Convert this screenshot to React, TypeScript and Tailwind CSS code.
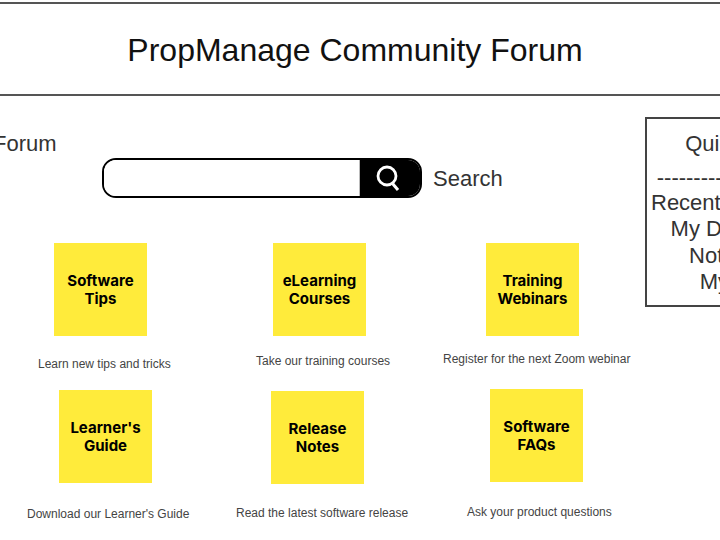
import React from "react";

const sans = "font-['Liberation_Sans',Arial,sans-serif]";

interface TileProps {
  lines: string[];
  caption: string;
  boxClass: string;
  captionClass: string;
}

function Tile({ lines, caption, boxClass, captionClass }: TileProps) {
  return (
    <div className="flex flex-col items-start">
      <div className={`w-[93px] h-[93px] bg-[#ffeb3b] flex flex-col items-center justify-center text-[15px] leading-[17.5px] font-bold text-black font-['Inter',sans-serif] ${boxClass}`}>
        {lines.map((l) => (
          <span key={l}>{l}</span>
        ))}
      </div>
      <p className={`text-[12px] leading-4 text-[#444] whitespace-nowrap ${sans} ${captionClass}`}>
        {caption}
      </p>
    </div>
  );
}

export default function App() {
  return (
    <div className={`w-[720px] h-[540px] overflow-hidden bg-white ${sans}`}>
      {/* Header */}
      <header className="mt-[2px] h-[94px] border-y-2 border-[#555] flex items-center justify-center">
        <h1 className="text-[32px] leading-[37px] text-[#111] mt-[3px] -ml-[10px]">PropManage Community Forum</h1>
      </header>

      <div className="flex w-[900px]">
        <main className="w-[645px] shrink-0">
          <p className="mt-[35px] -ml-[7px] text-[22px] leading-[26px] text-[#333]">Forum</p>

          {/* Search */}
          <div className="mt-[1px] ml-[102px] flex items-center">
            <div className="w-[320px] h-[40px] rounded-[14px] border-2 border-black flex overflow-hidden">
              <div className="flex-1 bg-white border-r border-[#bbb]" />
              <div className="w-[60px] bg-black flex items-center justify-center">
                <svg width="26" height="28" viewBox="0 0 26 28" fill="none" stroke="white" strokeWidth="2.8" className="-ml-[4px]">
                  <circle cx="12" cy="12" r="9" />
                  <path d="M17.5 19.5 L23 26" strokeWidth="3" />
                </svg>
              </div>
            </div>
            <span className="ml-[11px] mt-[2px] text-[22px] leading-[26px] text-[#333]">Search</span>
          </div>

          {/* Tiles */}
          <div className="mt-[45px] grid grid-cols-[216px_216px_213px] grid-rows-[146px_auto]">
            <Tile lines={["Software", "Tips"]} caption="Learn new tips and tricks" boxClass="ml-[54px]" captionClass="ml-[38px] mt-[20px]" />
            <Tile lines={["eLearning", "Courses"]} caption="Take our training courses" boxClass="ml-[57px]" captionClass="ml-[40px] mt-[17px]" />
            <Tile lines={["Training", "Webinars"]} caption="Register for the next Zoom webinar" boxClass="ml-[54px]" captionClass="ml-[11px] mt-[15px]" />
            <Tile lines={["Learner's", "Guide"]} caption="Download our Learner's Guide" boxClass="ml-[59px] mt-[1px]" captionClass="ml-[27px] mt-[23px]" />
            <Tile lines={["Release", "Notes"]} caption="Read the latest software release" boxClass="ml-[55px] mt-[2px]" captionClass="ml-[20px] mt-[21px]" />
            <Tile lines={["Software", "FAQs"]} caption="Ask your product questions" boxClass="ml-[58px]" captionClass="ml-[35px] mt-[22px]" />
          </div>
        </main>

        {/* Quick links */}
        <aside className="mt-[21px] w-[192px] h-[190px] shrink-0 border-2 border-[#444] pt-[12px] text-center text-[22px] text-[#333] whitespace-nowrap">
          <p className="leading-[26px] pl-[2px]">Quick Links</p>
          <p className="mt-[8px] leading-[26px]">-----------------------</p>
          <div className="leading-[26.3px] -mt-[1px]">
            <p className="pl-[4px]">Recent Discussions</p>
            <p className="pl-[12px]">My Discussions</p>
            <p className="pl-[16px]">Notifications</p>
            <p className="pl-[8px]">My Posts</p>
          </div>
        </aside>
      </div>
    </div>
  );
}
